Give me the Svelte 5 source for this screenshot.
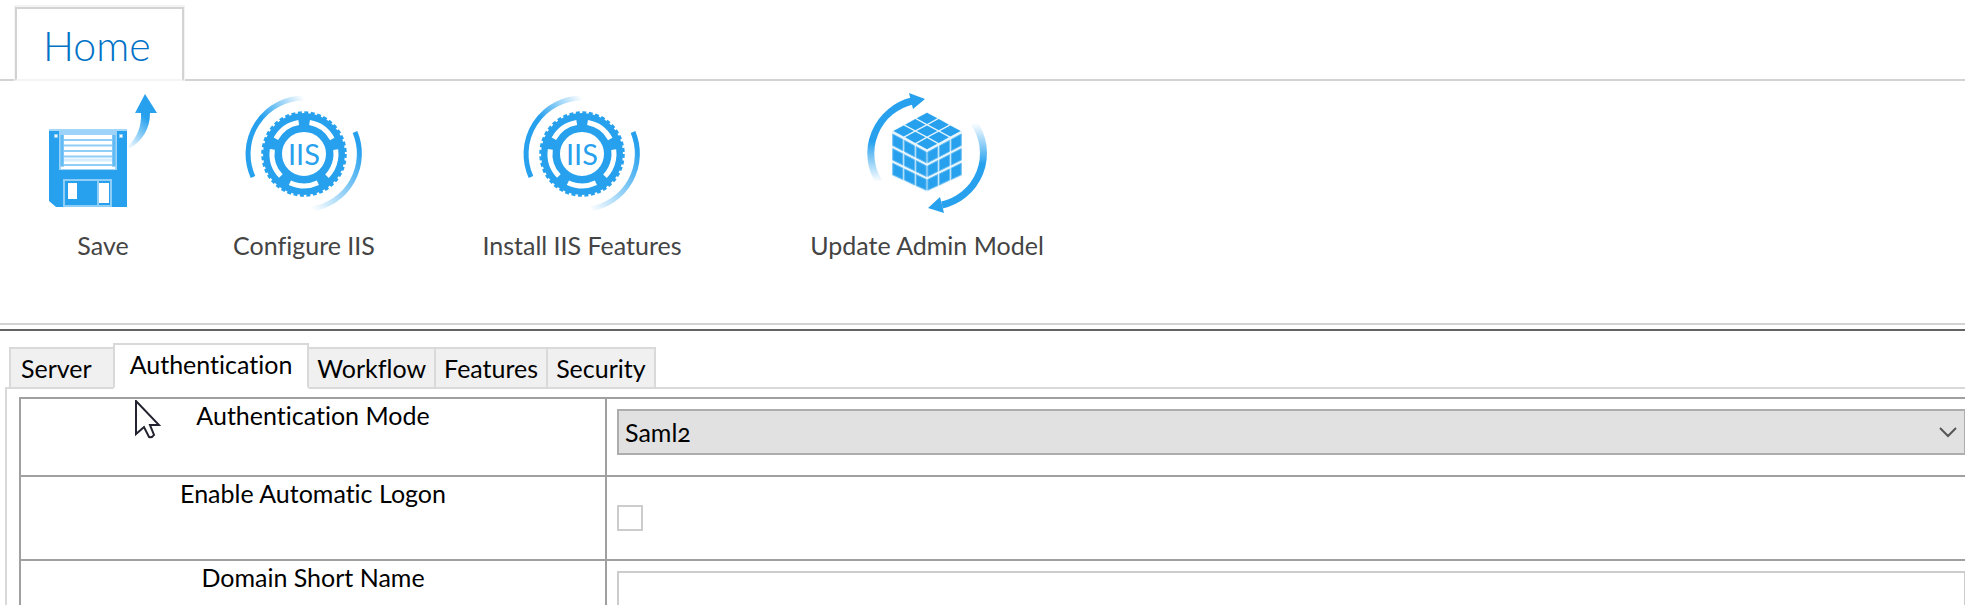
<script lang="ts">
	const actions = [
		{ label: 'Save', icon: 'save' },
		{ label: 'Configure IIS', icon: 'iis' },
		{ label: 'Install IIS Features', icon: 'iis' },
		{ label: 'Update Admin Model', icon: 'cube' }
	]
	const tabs = ['Server', 'Authentication', 'Workflow', 'Features', 'Security']

	let active = 'Authentication'
	let mode = 'Saml2'
	let automaticLogon = false
	let domain = ''

	type Point = [number, number]

	// Splits a four-cornered face into 3x3 cells, leaving a gap around each one
	function split(a: Point, b: Point, c: Point, d: Point, gapX: number, gapY: number) {
		const at = (u: number, v: number) =>
			[0, 1]
				.map((i) => (a[i] * (1 - u) + b[i] * u) * (1 - v) + (d[i] * (1 - u) + c[i] * u) * v)
				.map((n) => n.toFixed(1))
				.join(',')
		const cells: string[] = []
		for (let row = 0; row < 3; row++) {
			for (let col = 0; col < 3; col++) {
				const [u0, u1] = [(col + gapX) / 3, (col + 1 - gapX) / 3]
				const [v0, v1] = [(row + gapY) / 3, (row + 1 - gapY) / 3]
				cells.push([at(u0, v0), at(u1, v0), at(u1, v1), at(u0, v1)].join(' '))
			}
		}
		return cells
	}

	const topCells = split([60, 22], [95, 41], [60, 60], [25, 41], 0.06, 0.06)
	const sideCells = [
		...split([25, 42], [60, 61], [60, 102], [25, 86], 0.07, 0.11),
		...split([60, 61], [95, 42], [95, 86], [60, 102], 0.07, 0.11)
	]
</script>

<div class="app">
	<header>
		<nav class="ribbon-tabs">
			<button class="home">Home</button>
		</nav>
		<div class="ribbon">
			{#each actions as action}
				<button class="action">
					<svg viewBox="0 0 120 120" aria-hidden="true">
						{#if action.icon === 'save'}
							<defs>
								<linearGradient id="swoosh" x1="0" y1="1" x2="0.5" y2="0">
									<stop offset="0" stop-color="#27a1ee" stop-opacity="0" />
									<stop offset="0.7" stop-color="#27a1ee" />
								</linearGradient>
							</defs>
							<path d="M6 41H84V117H13L6 111Z" fill="#27a1ee" />
							<path d="M6 40H84" stroke="#a5d8f8" stroke-width="2" />
							<path d="M16 40H74V80H16Z" fill="#9dd3f8" />
							<path d="M18 77H72V79H18Z" fill="#fff" />
							<path d="M21 45H69V77H21Z" fill="#fff" />
							<path d="M19 45V76M71 45V76" stroke="#62bbf3" stroke-width="3" />
							<path
								d="M21 50H69M21 55.5H69M21 61H69M21 66.5H69M21 75H69"
								stroke="#8fcef7"
								stroke-width="2"
							/>
							<path d="M21 70H69" stroke="#d5edfc" stroke-width="3" />
							<path d="M11 44H15V48H11ZM76 44H80V48H76Z" fill="#8fcdf7" />
							<path d="M12 45H14V47H12ZM77 45H79V47H77Z" fill="#fff" />
							<path d="M21 117V90H68V117" fill="none" stroke="#8fcef7" stroke-width="2" />
							<path d="M21 116H68" stroke="#8fcef7" stroke-width="2" />
							<path d="M25 93H34V109H25ZM56 93H66V113H56Z" fill="#fff" />
							<path d="M55 91V115" stroke="#8fcef7" stroke-width="2" />
							<path
								d="M102 4L114 23L107 23Q107 46 86 59L85 56Q99 43 98 23L92 23Z"
								fill="url(#swoosh)"
							/>
						{:else if action.icon === 'iis'}
							<defs>
								<linearGradient id="arc-left" x1="0" y1="1" x2="1" y2="0">
									<stop offset="0.5" stop-color="#27a1ee" />
									<stop offset="1" stop-color="#27a1ee" stop-opacity="0" />
								</linearGradient>
								<linearGradient id="arc-right" x1="1" y1="0" x2="0" y2="1">
									<stop offset="0.1" stop-color="#27a1ee" />
									<stop offset="1" stop-color="#27a1ee" stop-opacity="0" />
								</linearGradient>
							</defs>
							<g fill="none" stroke="#27a1ee">
								<circle cx="60" cy="64" r="41.5" stroke-width="2.5" stroke-dasharray="4 2.519" />
								<circle cx="60" cy="64" r="31.5" stroke-width="19" />
								<circle
									cx="60"
									cy="64"
									r="32"
									stroke="#fff"
									stroke-width="5"
									stroke-dasharray="29 11.212"
									transform="rotate(-80 60 64)"
								/>
							</g>
							<g fill="none" stroke-width="5">
								<path d="M9 87A56 56 0 0 1 60 8" stroke="url(#arc-left)" />
								<path d="M111 42A56 56 0 0 1 68 119" stroke="url(#arc-right)" />
							</g>
							<text x="60" y="75" text-anchor="middle">IIS</text>
						{:else}
							<defs>
								<linearGradient id="turn-up" x1="0" y1="1" x2="0" y2="0">
									<stop offset="0" stop-color="#27a1ee" stop-opacity="0" />
									<stop offset="0.5" stop-color="#27a1ee" />
								</linearGradient>
								<linearGradient id="turn-down" x1="0" y1="0" x2="0" y2="1">
									<stop offset="0" stop-color="#27a1ee" stop-opacity="0" />
									<stop offset="0.5" stop-color="#27a1ee" />
								</linearGradient>
							</defs>
							<g fill="none" stroke-width="7">
								<path d="M12 92A54 54 0 0 1 45 11" stroke="url(#turn-up)" />
								<path d="M107 33A53 53 0 0 1 75 115" stroke="url(#turn-down)" />
							</g>
							<path d="M42 3L58 9L46 19ZM77 123L61 118L73 107Z" fill="#27a1ee" />
							<path d="M60 22L95 41V86L60 102L25 86V41Z" fill="#e8f5fd" />
							<g fill="#27a1ee">
								{#each topCells as points}
									<polygon {points} />
								{/each}
							</g>
							<g fill="#27a1ee" stroke="#62bbf3">
								{#each sideCells as points}
									<polygon {points} />
								{/each}
							</g>
						{/if}
					</svg>
					<span>{action.label}</span>
				</button>
			{/each}
		</div>
	</header>

	<main>
		<div class="tabs" role="tablist">
			{#each tabs as tab}
				<button
					role="tab"
					class="tab"
					class:first={tab === 'Server'}
					class:active={tab === active}
					aria-selected={tab === active}
					on:click={() => (active = tab)}>{tab}</button
				>
			{/each}
		</div>
		<div class="panel" role="tabpanel">
			<table>
				<tbody>
					<tr>
						<th scope="row"><label for="mode">Authentication Mode</label></th>
						<td>
							<div class="dropdown">
								<select id="mode" bind:value={mode}>
									<option>Saml2</option>
								</select>
								<svg class="chevron" viewBox="0 0 20 12" aria-hidden="true">
									<path d="M2 2L10 10L18 2" fill="none" stroke="#555" stroke-width="2" />
								</svg>
							</div>
						</td>
					</tr>
					<tr class="tall">
						<th scope="row"><label for="logon">Enable Automatic Logon</label></th>
						<td><input id="logon" type="checkbox" bind:checked={automaticLogon} /></td>
					</tr>
					<tr class="tall">
						<th scope="row"><label for="domain">Domain Short Name</label></th>
						<td><input id="domain" type="text" bind:value={domain} /></td>
					</tr>
				</tbody>
			</table>
			<svg class="pointer" viewBox="0 0 26 40" aria-hidden="true">
				<path
					d="M1 1V34L9 27L14 37Q17 38 19 35L15 25H24Z"
					fill="#fff"
					stroke="#222230"
					stroke-width="2"
				/>
			</svg>
		</div>
	</main>
</div>

<style>
	:global(body) {
		margin: 0;
		background: #fff;
	}

	.app {
		height: 100vh;
		overflow: hidden;
		color: #000;
		font-family: Lato, 'Open Sans', sans-serif;
		font-size: 25px;
		font-variant-ligatures: none;
		line-height: 32px;
	}

	button,
	select,
	input {
		box-sizing: border-box;
		margin: 0;
		border-radius: 0;
		color: inherit;
		font: inherit;
		font-variant-ligatures: none;
	}

	.ribbon-tabs {
		display: flex;
		padding: 7px 15px 0;
		border-bottom: 2px solid #d3d3d3;
	}

	.home {
		height: 74px;
		margin-bottom: -2px;
		padding: 3px 31px 0 26px;
		border: 2px solid #d3d3d3;
		border-bottom-color: #f4f4f4;
		background: #fff;
		box-shadow: 0 -1px 0 1px #f3f3f3;
		clip-path: inset(-2px -2px 0);
		color: #0072c6;
		font-size: 41px;
		font-weight: 300;
	}

	.ribbon {
		display: grid;
		grid-template-columns: 206px 196px 360px 330px;
		height: 242px;
		border-bottom: 2px solid #d3d3d3;
	}

	.action {
		display: flex;
		flex-direction: column;
		align-items: center;
		gap: 19px;
		padding: 9px 0 0;
		border: 0;
		background: none;
		color: #444;
	}

	.action svg {
		width: 120px;
		height: 120px;
		overflow: visible;
	}

	.action text {
		fill: #27a1ee;
		font-size: 29px;
	}

	main {
		margin-top: 4px;
		padding: 12px 0 0 5px;
		border-top: 2px solid #646464;
	}

	.tabs {
		display: flex;
		align-items: flex-end;
		padding-left: 4px;
	}

	.tab {
		height: 42px;
		margin-right: -2px;
		padding: 0 8px;
		border: 2px solid #d9d9d9;
		background: #f0f0f0;
	}

	.tab.first {
		padding: 0 21px 0 10px;
	}

	.tab.active {
		z-index: 1;
		height: 46px;
		padding: 0 15px 4px;
		border-bottom-color: #fff;
		background: #fff;
	}

	.panel {
		position: relative;
		margin-top: -2px;
		padding: 8px 0 0 12px;
		border: 2px solid #d9d9d9;
		border-width: 2px 0 0 2px;
	}

	table {
		width: 100%;
		border-collapse: collapse;
		border-left: 2px solid #a0a0a0;
	}

	tr {
		height: 78px;
		border-top: 2px solid #a0a0a0;
	}

	.tall {
		height: 84px;
	}

	th {
		width: 584px;
		padding: 0;
		border-right: 2px solid #a0a0a0;
		font-weight: 400;
		vertical-align: top;
	}

	td {
		padding: 10px 0 10px 10px;
		vertical-align: top;
	}

	.dropdown {
		position: relative;
	}

	select {
		display: block;
		appearance: none;
		width: 100%;
		height: 46px;
		padding: 0 40px 0 6px;
		border: 2px solid #adadad;
		border-right-width: 1px;
		background: #e1e1e1;
		font-variant-numeric: oldstyle-nums;
	}

	.chevron {
		position: absolute;
		top: 17px;
		right: 7px;
		width: 20px;
		height: 12px;
		pointer-events: none;
	}

	input[type='checkbox'] {
		display: block;
		appearance: none;
		width: 26px;
		height: 26px;
		margin-top: 18px;
		border: 2px solid #ccc;
		background: #fff;
	}

	input[type='checkbox']:checked {
		box-shadow: inset 0 0 0 4px #fff;
		background: #444;
	}

	input[type='text'] {
		display: block;
		width: 100%;
		height: 46px;
		padding: 0 6px;
		border: 2px solid #ccc;
		border-right-width: 1px;
		background: #fff;
	}

	.pointer {
		position: absolute;
		top: 11px;
		left: 128px;
		width: 26px;
		height: 40px;
		pointer-events: none;
	}
</style>
